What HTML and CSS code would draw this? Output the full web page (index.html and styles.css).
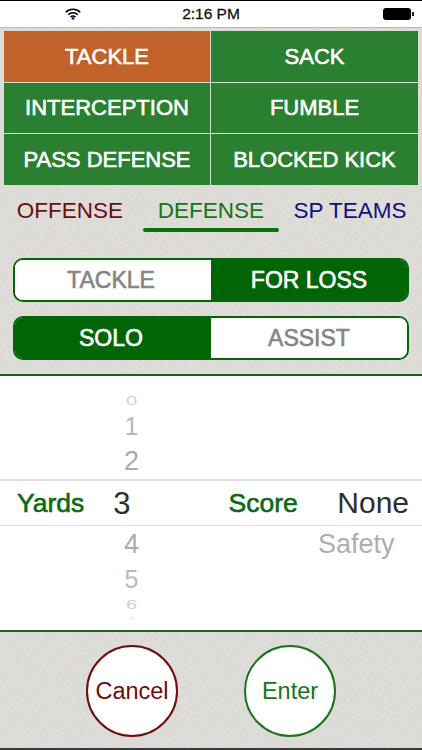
FILE: index.html
```html
<!DOCTYPE html>
<html lang="en">
<head>
	<meta charset="utf-8">
	<meta name="viewport" content="width=device-width,initial-scale=1">
	<title>Defense Entry</title>
	<link rel="stylesheet" href="styles.css">
</head>
<body>
	<div class="screen">
		<header class="status-bar">
			<svg class="status-bar__wifi" width="16" height="12" viewBox="0 0 16 12" aria-hidden="true">
				<path d="M.8 4.2a10.2 10.2 0 0 1 14.4 0M3.2 6.7a6.8 6.8 0 0 1 9.6 0M5.5 9a3.5 3.5 0 0 1 5 0" fill="none" stroke="#000" stroke-width="1.6"/>
				<path d="M8 12 6.3 10.2a2.4 2.4 0 0 1 3.4 0z"/>
			</svg>
			<span class="status-bar__time">2:16 PM</span>
			<span class="status-bar__battery" aria-hidden="true"></span>
		</header>

		<div class="plays">
			<button class="plays__cell plays__cell--active">TACKLE</button>
			<button class="plays__cell">SACK</button>
			<button class="plays__cell">INTERCEPTION</button>
			<button class="plays__cell">FUMBLE</button>
			<button class="plays__cell">PASS DEFENSE</button>
			<button class="plays__cell">BLOCKED KICK</button>
		</div>

		<nav class="tabs">
			<a class="tabs__item tabs__item--offense">OFFENSE</a>
			<a class="tabs__item tabs__item--defense">DEFENSE</a>
			<a class="tabs__item tabs__item--teams">SP TEAMS</a>
		</nav>

		<div class="toggles">
			<div class="segment">
				<span class="segment__part">TACKLE</span>
				<span class="segment__part segment__part--on">FOR LOSS</span>
			</div>
			<div class="segment">
				<span class="segment__part segment__part--on">SOLO</span>
				<span class="segment__part">ASSIST</span>
			</div>
		</div>

		<section class="picker">
			<div class="picker__row picker__row--above">
				<div class="wheel wheel--yards">
					<span class="wheel__item wheel__item--far">0</span>
					<span class="wheel__item wheel__item--mid">1</span>
					<span class="wheel__item wheel__item--near">2</span>
				</div>
			</div>
			<div class="picker__row picker__row--selected">
				<span class="picker__label picker__label--yards">Yards</span>
				<span class="picker__value picker__value--yards">3</span>
				<span class="picker__label picker__label--score">Score</span>
				<span class="picker__value picker__value--score">None</span>
			</div>
			<div class="picker__row picker__row--below">
				<div class="wheel wheel--yards">
					<span class="wheel__item wheel__item--near">4</span>
					<span class="wheel__item wheel__item--mid">5</span>
					<span class="wheel__item wheel__item--far">6</span>
					<span class="wheel__item wheel__item--edge">7</span>
				</div>
				<div class="wheel wheel--score">
					<span class="wheel__item wheel__item--near wheel__item--word">Safety</span>
				</div>
			</div>
		</section>

		<footer class="actions">
			<button class="round-btn round-btn--cancel">Cancel</button>
			<button class="round-btn round-btn--enter">Enter</button>
		</footer>
	</div>
</body>
</html>
```

FILE: styles.css
```css
* {
	box-sizing: border-box;
}
html,
body {
	margin: 0;
	height: 100%;
}
body {
	font-family: 'Liberation Sans', Arial, sans-serif;
	line-height: 1;
}
button {
	background: none;
	border: none;
	color: inherit;
	font-family: inherit;
	padding: 0;
}

.screen {
	--green: #006505;
	background: #dfdeda url("data:image/svg+xml,%3Csvg xmlns='http://www.w3.org/2000/svg' width='200' height='200'%3E%3Cfilter id='n'%3E%3CfeTurbulence type='fractalNoise' baseFrequency='.5' numOctaves='2'/%3E%3CfeColorMatrix values='0 0 0 0 .45 0 0 0 0 .45 0 0 0 0 .42 .3 0 0 0 -.09'/%3E%3C/filter%3E%3Crect width='200' height='200' filter='url(%23n)'/%3E%3C/svg%3E");
	border-block-start: 1px solid #000;
	border-block-end: 2px solid #3a3a3a;
	display: flex;
	flex-direction: column;
	height: 750px;
	overflow: hidden;
}

/* Status bar */
.status-bar {
	align-items: center;
	background: #fff;
	border-block-end: 1px solid #b9b9b7;
	display: grid;
	flex: none;
	grid-template-columns: 1fr auto 1fr;
	height: 27px;
}
.status-bar__wifi {
	margin-inline-start: 65px;
}
.status-bar__time {
	color: #111;
	font-size: 15.5px;
	-webkit-text-stroke: 0.3px #111;
}
.status-bar__battery {
	background: #000;
	border-radius: 3px;
	height: 12px;
	justify-self: end;
	margin-inline-end: 11px;
	position: relative;
	width: 28px;

	&::after {
		background: #222;
		content: '';
		height: 4px;
		left: 29px;
		position: absolute;
		top: 4px;
		width: 2px;
	}
}

/* Play grid */
.plays {
	background: #cfe2cd;
	display: grid;
	flex: none;
	gap: 1px;
	grid-template-columns: 206px 207px;
	grid-template-rows: 51px 50px 51px;
	margin: 3px 4px 0;
}
.plays__cell {
	background: #2a8030;
	color: #fff;
	font-size: 22px;
	-webkit-text-stroke: 0.6px #fff;
}
.plays__cell--active {
	background: #c1622a;
}

/* Tabs */
.tabs {
	display: grid;
	flex: none;
	grid-template-columns: 140px 142px 140px;
	height: 47px;
}
.tabs__item {
	align-items: center;
	display: flex;
	font-size: 22.5px;
	justify-content: center;
	padding-block-start: 5px;
}
.tabs__item--offense {
	color: #6d0d10;
}
.tabs__item--defense {
	color: #16751b;
	margin-inline: 3px;
	position: relative;

	/* Underline of the current tab */
	&::after {
		background: #0a730f;
		border-radius: 2px;
		bottom: 0;
		content: '';
		height: 4px;
		left: 0;
		position: absolute;
		right: 0;
	}
}
.tabs__item--teams {
	color: #10107c;
	padding-inline-end: 4px;
}

/* Toggles */
.toggles {
	display: flex;
	flex: none;
	flex-direction: column;
	gap: 14px;
	padding: 26px 13px 14px;
}
.segment {
	border: 2px solid var(--green);
	border-radius: 10px;
	display: grid;
	grid-template-columns: 196px 1fr;
	height: 44px;
	overflow: hidden;
}
.segment__part {
	align-items: center;
	background: #fff;
	color: #858585;
	display: flex;
	font-size: 23px;
	justify-content: center;
	-webkit-text-stroke: 0.6px #858585;

	&:first-child {
		padding-inline-end: 4px;
	}
}
.segment__part--on {
	background: var(--green);
	color: #fff;
	-webkit-text-stroke-color: #fff;
}

/* Picker */
.picker {
	background: #fff;
	border-block: 2px solid #0d6b12;
	display: flex;
	flex: none;
	flex-direction: column;
	height: 258px;
}
.picker__row {
	display: flex;
}
.picker__row--above {
	align-items: flex-end;
	height: 103px;
}
.picker__row--selected {
	align-items: center;
	border-block: 1px solid #dcdcdc;
	border-block-start-width: 2px;
	height: 47px;
}
.picker__row--below {
	align-items: flex-start;
	flex: 1;
}
.picker__label {
	color: #0b6a10;
	font-size: 26.5px;
	-webkit-text-stroke: 0.6px #0b6a10;
}
.picker__label--yards {
	margin-inline-start: 17px;
}
.picker__label--score {
	margin-inline-start: 98px;
}
.picker__value {
	color: #2e2e2e;
	font-size: 31px;
}
.picker__value--yards {
	margin-inline-start: 29px;
}
.picker__value--score {
	font-size: 30px;
	margin-inline-start: auto;
	margin-inline-end: 13px;
}

.wheel {
	display: flex;
	flex-direction: column;
}
.wheel--yards {
	width: 263px;
}
.wheel--score {
	flex: 1;
}
.wheel__item {
	align-items: center;
	color: #ababab;
	display: flex;
	font-size: 27px;
	justify-content: center;
}
.wheel--yards .wheel__item {
	margin-inline-start: 105px;
	width: 53px;
}
.wheel__item--near {
	height: 36px;
}
.wheel__item--mid {
	color: #b9b9b9;
	font-size: 25px;
	height: 34px;
}
.wheel__item--far {
	color: #d0d0d0;
	font-size: 20px;
	height: 17px;
	transform: scaleY(0.6);
}
.wheel__item--edge {
	color: #e2e2e2;
	font-size: 14px;
	height: 11px;
	transform: scaleY(0.3);
}
.wheel__item--word {
	color: #aeaeae;
	font-size: 27px;
	justify-content: flex-start;
	margin-inline-start: 55px;
}

/* Bottom actions */
.actions {
	display: flex;
	flex: 1;
	gap: 66px;
	padding-block-start: 13px;
	padding-inline-start: 86px;
}
.round-btn {
	background: #fff;
	border: 2.5px solid currentColor;
	border-radius: 50%;
	font-size: 23.5px;
	height: 92px;
	width: 92px;
}
.round-btn--cancel {
	color: #6d0d10;
}
.round-btn--enter {
	color: #16751b;
}
```
